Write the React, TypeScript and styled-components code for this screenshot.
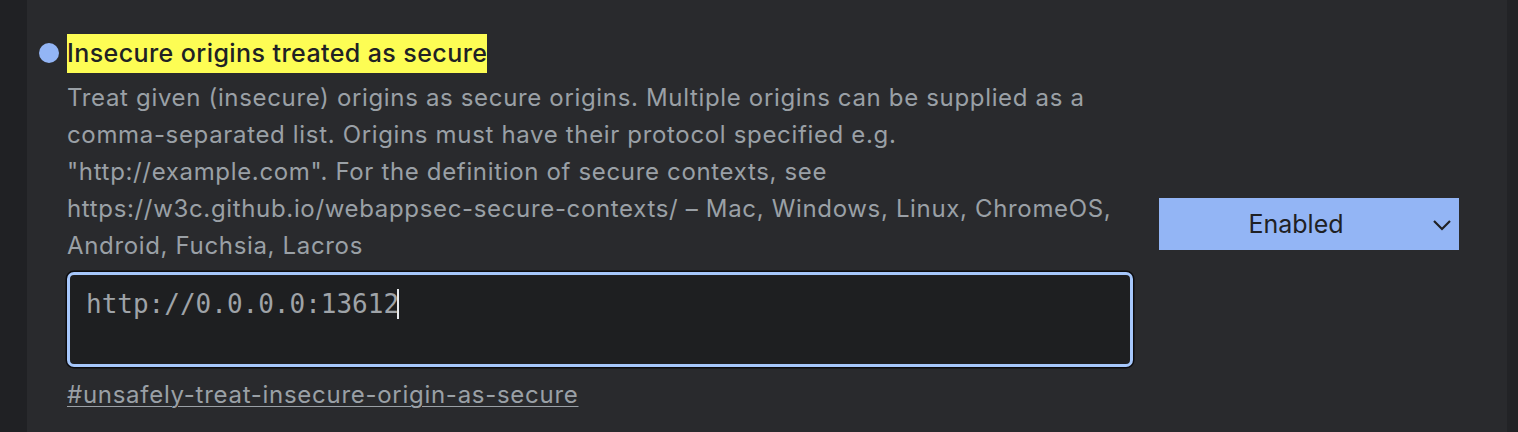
import React from "react";
import styled, { createGlobalStyle } from "styled-components";

const Global = createGlobalStyle`
  html, body { margin: 0; padding: 0; background: #292a2d; overflow: hidden; }
  body { font-family: Inter, "Noto Sans", "Liberation Sans", sans-serif; -webkit-font-smoothing: antialiased; }
`;

const Page = styled.div`
  display: flex;
  width: 1518px;
  height: 432px;
  background: #292a2d;
`;

const Rail = styled.div<{ $w: number; $bg: string }>`
  flex: 0 0 ${(p) => p.$w}px;
  background: ${(p) => p.$bg};
`;

const Main = styled.main`
  flex: 1;
  padding: 34px 0 0 12px;
  box-sizing: border-box;
`;

const Experiment = styled.section`
  display: flex;
  align-items: flex-start;
`;

const Dot = styled.span`
  flex: 0 0 20px;
  height: 20px;
  margin: 9px 8px 0 0;
  border-radius: 50%;
  background: #93b5f5;
`;

const Body = styled.div`
  flex: 0 0 1067px;
  display: flex;
  flex-direction: column;
`;

const Title = styled.h2`
  margin: 0;
  font-size: 25px;
  font-weight: 500;
  letter-spacing: 0.42px;
  line-height: 39px;
  color: #202124;
`;

const Mark = styled.mark`
  display: inline-block;
  background: #fdfd54;
  color: #202124;
  height: 39px;
`;

const Description = styled.p`
  margin: 6px 0 0;
  font-size: 24px;
  letter-spacing: 0.66px;
  line-height: 37px;
  color: #9aa0a6;
`;

const Editor = styled.div`
  margin-top: 8px;
  width: 1066px;
  height: 95px;
  box-sizing: border-box;
  border: 3px solid #a6c7fb;
  border-radius: 7px;
  box-shadow: 0 0 0 1.5px #0c0c0e;
  background: #1e1f21;
  padding: 14px 16px;
  font-family: "DejaVu Sans Mono", "Liberation Mono", monospace;
  font-size: 26px;
  line-height: 31px;
  color: #9fa3a8;
  white-space: pre;
`;

const Caret = styled.span`
  display: inline-block;
  width: 2px;
  height: 30px;
  margin-left: -2px;
  vertical-align: -6px;
  background: #e8eaed;
`;

const Permalink = styled.a`
  margin-top: 9px;
  font-size: 24px;
  letter-spacing: 0.72px;
  line-height: 37px;
  color: #9aa0a6;
  text-decoration: underline;
  text-underline-offset: 3px;
  text-decoration-thickness: 1px;
  align-self: flex-start;
`;

const Actions = styled.div`
  margin: 164px 0 0 25px;
`;

const Select = styled.div`
  position: relative;
  width: 300px;
  height: 52px;
  box-sizing: border-box;
  background: #93b5f5;
  color: #202124;
  font-size: 25px;
  display: flex;
  align-items: center;
  justify-content: center;
  padding-right: 26px;
`;

const Chevron = styled.svg`
  position: absolute;
  right: 7px;
  top: 20px;
`;

export default function App() {
  return (
    <>
      <Global />
      <Page>
        <Rail $w={27} $bg="#202124" />
        <Main>
          <Experiment>
            <Dot />
            <Body>
              <Title>
                <Mark>Insecure origins treated as secure</Mark>
              </Title>
              <Description>
                Treat given (insecure) origins as secure origins. Multiple origins can be supplied as a
                comma-separated list. Origins must have their protocol specified e.g.
                "http://example.com". For the definition of secure contexts, see
                https://w3c.github.io/webappsec-secure-contexts/ – Mac, Windows, Linux, ChromeOS,
                Android, Fuchsia, Lacros
              </Description>
              <Editor role="textbox">
                http://0.0.0.0:13612
                <Caret />
              </Editor>
              <Permalink href="#unsafely-treat-insecure-origin-as-secure">
                #unsafely-treat-insecure-origin-as-secure
              </Permalink>
            </Body>
            <Actions>
              <Select>
                Enabled
                <Chevron width="20" height="14" viewBox="0 0 20 14">
                  <polyline points="2,3 10,11 18,3" fill="none" stroke="#202124" strokeWidth="2.2" />
                </Chevron>
              </Select>
            </Actions>
          </Experiment>
        </Main>
        <Rail $w={11} $bg="#222326" />
      </Page>
    </>
  );
}
